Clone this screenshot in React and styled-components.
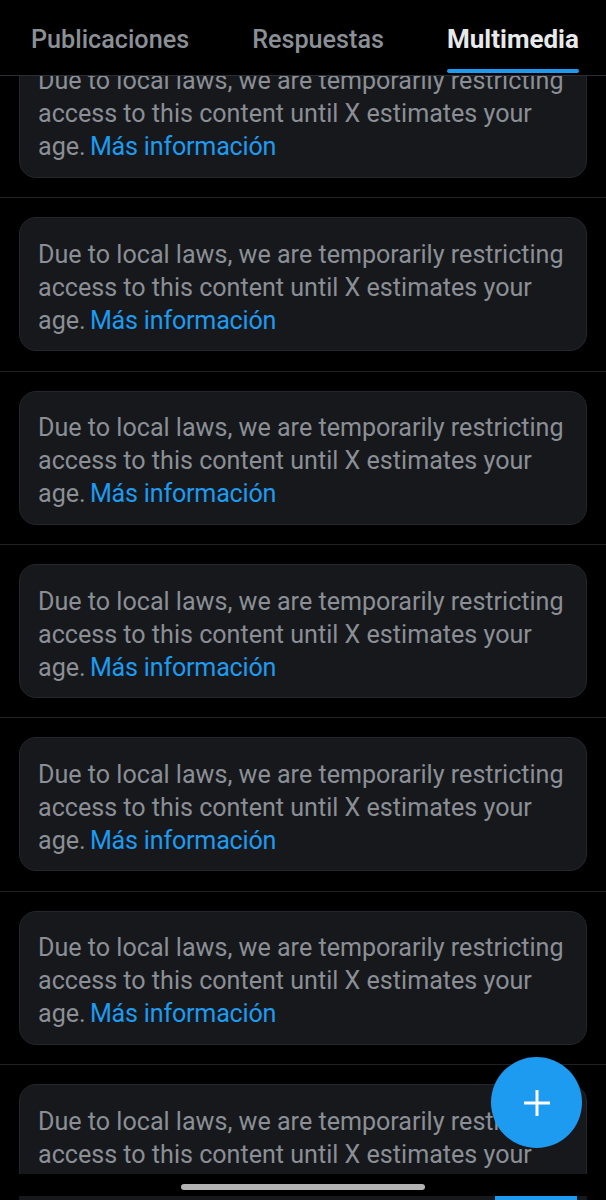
import React from "react";
import styled, { createGlobalStyle } from "styled-components";

const GlobalStyle = createGlobalStyle`
  html, body {
    margin: 0;
    padding: 0;
    background: #000;
  }
  body {
    font-family: Roboto, "Noto Sans", "Liberation Sans", sans-serif;
    -webkit-font-smoothing: antialiased;
  }
`;

const Screen = styled.div`
  position: relative;
  width: 606px;
  height: 1200px;
  overflow: hidden;
  background: #000;
`;

const Header = styled.nav`
  position: absolute;
  top: 0;
  left: 0;
  right: 0;
  z-index: 2;
  height: 75px;
  display: flex;
  align-items: stretch;
  padding-left: 31px;
  gap: 63px;
  background: #000;
  border-bottom: 1px solid #2a2d31;
`;

const Tab = styled.div`
  position: relative;
  display: flex;
  align-items: center;
  padding-top: 3px;
  font-size: ${p => (p.$active ? "26px" : "25.2px")};
  font-weight: ${p => (p.$active ? 700 : 500)};
  color: ${p => (p.$active ? "#e7e9ea" : "#8b9096")};

  &::after {
    content: "";
    display: ${p => (p.$active ? "block" : "none")};
    position: absolute;
    left: 0;
    right: 0;
    bottom: 2px;
    height: 4px;
    border-radius: 2px;
    background: #1d9bf0;
  }
`;

const Feed = styled.div`
  display: flex;
  flex-direction: column;
  padding-top: 24.8px;
`;

const Item = styled.article`
  padding: 19.2px 19px;
  border-bottom: 1px solid #1f2225;
`;

const Notice = styled.div`
  background: #16181c;
  border: 1px solid #23262a;
  border-radius: 17px;
  padding: 19.5px 18px 13.5px;
  font-size: 25.1px;
  line-height: 33px;
  color: #8b8f95;
  white-space: nowrap;
`;

const Link = styled.a`
  color: #1d9bf0;
  text-decoration: none;
  letter-spacing: -0.2px;
  margin-left: -2px;
`;

const Fab = styled.button`
  position: absolute;
  right: 24px;
  bottom: 52px;
  width: 91px;
  height: 91px;
  border: 0;
  border-radius: 50%;
  background: #1d9bf0;
  display: flex;
  align-items: center;
  justify-content: center;
  padding: 0;
  z-index: 3;
`;

const BottomBar = styled.div`
  position: absolute;
  left: 0;
  right: 0;
  bottom: 0;
  height: 26px;
  display: flex;
  flex-direction: column;
  background: #000;
  z-index: 4;
`;

const GestureArea = styled.div`
  height: 22px;
  display: flex;
  justify-content: center;
  padding-top: 10px;
  box-sizing: border-box;
`;

const Pill = styled.div`
  width: 244px;
  height: 6px;
  border-radius: 3px;
  background: #b3b3b3;
`;

const Strip = styled.div`
  flex: 1;
  margin: 0 19px;
  display: flex;
  justify-content: flex-end;
  padding-right: 10px;
  background: #16181c;
`;

const StripBlue = styled.div`
  width: 82px;
  background: #1d9bf0;
`;

const tabs = [
  { label: "Publicaciones" },
  { label: "Respuestas" },
  { label: "Multimedia", active: true },
];

function RestrictedNotice() {
  return (
    <Notice>
      Due to local laws, we are temporarily restricting
      <br />
      access to this content until X estimates your
      <br />
      age. <Link href="#">Más información</Link>
    </Notice>
  );
}

export default function App() {
  return (
    <>
      <GlobalStyle />
      <Screen>
        <Header>
          {tabs.map(t => (
            <Tab key={t.label} $active={t.active}>{t.label}</Tab>
          ))}
        </Header>

        <Feed>
          {Array.from({ length: 7 }).map((_, i) => (
            <Item key={i}>
              <RestrictedNotice />
            </Item>
          ))}
        </Feed>

        <Fab aria-label="Nuevo post">
          <svg width="28" height="28" viewBox="0 0 28 28">
            <path d="M14 1v26M1 14h26" stroke="#fff" strokeWidth="3" />
          </svg>
        </Fab>

        <BottomBar>
          <GestureArea>
            <Pill />
          </GestureArea>
          <Strip>
            <StripBlue />
          </Strip>
        </BottomBar>
      </Screen>
    </>
  );
}
